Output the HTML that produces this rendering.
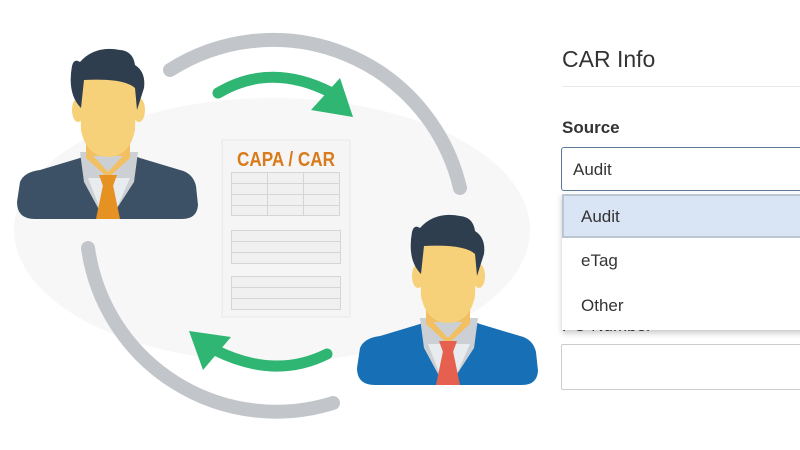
<!DOCTYPE html>
<html><head><meta charset="utf-8"><style>
html,body{margin:0;padding:0;width:800px;height:450px;overflow:hidden;background:#fff;font-family:"Liberation Sans","DejaVu Sans",sans-serif;color:#333}
svg{position:absolute;left:0;top:0}
.t{position:absolute;left:562px;top:46px;font-size:23px;color:#333}
.hr{position:absolute;left:562px;top:86px;width:238px;height:1px;background:#eaeaea}
.lbl{position:absolute;left:562px;top:118px;font-size:17px;font-weight:bold;color:#333}
.sel{position:absolute;left:561px;top:147px;width:250px;height:44px;border:1px solid #5d7896;border-radius:3px;box-sizing:border-box;font-size:17px;padding:12px 0 0 11px}
.po{position:absolute;left:562px;top:316px;font-size:17px;color:#333}
.inp{position:absolute;left:561px;top:344px;width:250px;height:46px;border:1px solid #ccc;border-radius:2px;box-sizing:border-box}
.dd{position:absolute;left:562px;top:193px;width:250px;height:137px;background:#fff;box-shadow:0 3px 6px rgba(0,0,0,.22)}
.o{position:absolute;left:0;width:250px;height:44px;box-sizing:border-box;font-size:17px;padding:12px 0 0 19px;color:#333}
.o1{top:1px;background:#d9e5f4;border:2px solid #bcc6d2;padding:11px 0 0 17px}
</style></head><body>
<svg width="560" height="450" viewBox="0 0 560 450">
<ellipse cx="272" cy="230" rx="258" ry="132" fill="#f7f7f7"/>
<path d="M170,70 A192,192 0 0 1 460,188" fill="none" stroke="#c2c6ca" stroke-width="14" stroke-linecap="round"/>
<path d="M88,248 A190,190 0 0 0 333,403" fill="none" stroke="#c2c6ca" stroke-width="14" stroke-linecap="round"/>
<path d="M218,93 Q270,62 330,92" fill="none" stroke="#2eb672" stroke-width="11" stroke-linecap="round"/>
<polygon points="311,110 340,78 353,117" fill="#2eb672"/>
<path d="M327,354 Q275,380 215,350" fill="none" stroke="#2eb672" stroke-width="11" stroke-linecap="round"/>
<polygon points="189,331 231,337 203,370" fill="#2eb672"/>
<rect x="222" y="140" width="128" height="177" fill="#f5f5f5" stroke="#e8e8e8"/>
<text x="286" y="166" text-anchor="middle" font-family="Liberation Sans Narrow,Liberation Sans,sans-serif" font-weight="bold" font-size="20" fill="#d97b1a" textLength="98" lengthAdjust="spacingAndGlyphs">CAPA / CAR</text>
<g fill="#f0f0f0" stroke="#d5d5d5" stroke-width="1">
<rect x="231.5" y="172.5" width="108" height="43"/>
<rect x="231.5" y="230.5" width="109" height="33"/>
<rect x="231.5" y="276.5" width="109" height="33"/>
</g>
<g stroke="#d5d5d5" stroke-width="1">
<path d="M231,183.5H340M231,194.5H340M231,205.5H340M267.5,172V216M303.5,172V216M231,241.5H341M231,252.5H341M231,287.5H341M231,298.5H341"/>
</g>
<g id="p1">
<path d="M20,182 Q24,172 40,170 L80,158 Q95,152 100,146 L118,146 Q124,152 140,158 L180,170 Q193,173 196,186 L198,205 Q197,219 182,219 L35,219 Q17,219 17,202 Z" fill="#3d5166"/>
<polygon points="80,152 138,152 134,182 110,219 104,219 84,182" fill="#ccd0d4"/>
<polygon points="88,178 130,178 112,219 104,219" fill="#e9ecef"/>
<rect x="86" y="128" width="44" height="28" fill="#f2c063"/>
<path d="M86,148 L108,172 L130,148 L130,158 L108,178 L86,158Z" fill="#f2c063"/>
<ellipse cx="78" cy="110" rx="6" ry="12" fill="#f7d07a"/>
<ellipse cx="139" cy="110" rx="6" ry="12" fill="#f7d07a"/>
<path d="M80,88 Q80,75 108,75 Q136,75 136,92 L135,130 Q130,156 108,157 Q86,156 81,130 Z" fill="#f7d07a"/>
<path d="M72,66 Q74,58 80,62 Q95,45 120,50 Q133,51 135,65 Q146,72 144,88 L137,110 L135,88 Q124,78 84,80 L81,108 Q67,94 72,66 Z" fill="#2f3e4e"/>
<polygon points="99,175 117,175 113,186 103,186" fill="#e69222"/>
<polygon points="103,185 113,185 120,219 96,219" fill="#e69222"/>
</g>
<g transform="translate(340,166)">
<path d="M20,182 Q24,172 40,170 L80,158 Q95,152 100,146 L118,146 Q124,152 140,158 L180,170 Q193,173 196,186 L198,205 Q197,219 182,219 L35,219 Q17,219 17,202 Z" fill="#1770b5"/>
<polygon points="80,152 138,152 134,182 110,219 104,219 84,182" fill="#ccd0d4"/>
<polygon points="88,178 130,178 112,219 104,219" fill="#e9ecef"/>
<rect x="86" y="128" width="44" height="28" fill="#f2c063"/>
<path d="M86,148 L108,172 L130,148 L130,158 L108,178 L86,158Z" fill="#f2c063"/>
<ellipse cx="78" cy="110" rx="6" ry="12" fill="#f7d07a"/>
<ellipse cx="139" cy="110" rx="6" ry="12" fill="#f7d07a"/>
<path d="M80,88 Q80,75 108,75 Q136,75 136,92 L135,130 Q130,156 108,157 Q86,156 81,130 Z" fill="#f7d07a"/>
<path d="M72,66 Q74,58 80,62 Q95,45 120,50 Q133,51 135,65 Q146,72 144,88 L137,110 L135,88 Q124,78 84,80 L81,108 Q67,94 72,66 Z" fill="#2f3e4e"/>
<polygon points="99,175 117,175 113,186 103,186" fill="#e5604f"/>
<polygon points="103,185 113,185 120,219 96,219" fill="#e5604f"/>
</g>
</svg>
<div class="t">CAR Info</div>
<div class="hr"></div>
<div class="lbl">Source</div>
<div class="sel">Audit</div>
<div class="po">PO Number</div>
<div class="inp"></div>
<div class="dd">
<div class="o o1">Audit</div>
<div class="o" style="top:46px">eTag</div>
<div class="o" style="top:91px">Other</div>
</div>
</body></html>
